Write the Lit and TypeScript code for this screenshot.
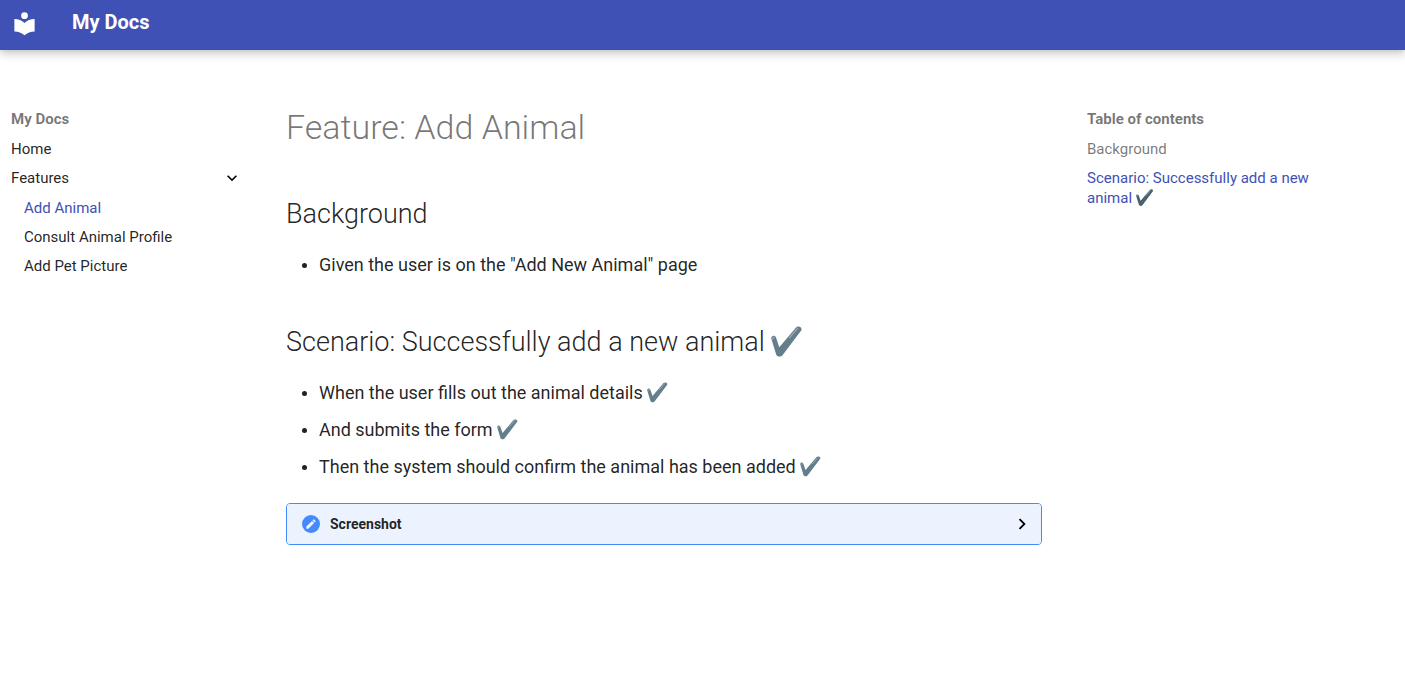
import { LitElement, html, css, svg } from "lit";
import { customElement } from "lit/decorators.js";

interface Entry { label: string; active?: boolean }

const pages: Entry[] = [
  { label: "Add Animal", active: true },
  { label: "Consult Animal Profile" },
  { label: "Add Pet Picture" },
];

const steps = [
  "When the user fills out the animal details",
  "And submits the form",
  "Then the system should confirm the animal has been added",
];

const check = html`<svg class="check" viewBox="0 0 36 36" role="img" aria-label="passed">
  <path class="check-body" d="M.3 14.500C0 10.800 4.500 10.200 5.700 13L9.600 24.500 28.800 1.900C31-.6 36.600 1 35.200 4.800L13.800 33.200C12 36.200 7.200 36.200 6 33z"/>
  <path fill="none" stroke="#b0bec5" stroke-width="1.500" stroke-linecap="round" opacity=".7" d="M21.500 13.500 30.500 3M2.200 15.200c-.1-1.300.5-2 1.500-2.100"/>
</svg>`;

const chevron = svg`<path d="M8.59 16.58 13.17 12 8.59 7.41 10 6l6 6-6 6z"/>`;

@customElement("app-root")
export class AppRoot extends LitElement {
  static styles = css`
    :host {
      display: block;
      font-family: Roboto, sans-serif;
      color: rgba(0, 0, 0, 0.87);
      -webkit-font-smoothing: antialiased;
    }
    a { color: inherit; text-decoration: none; }
    ul { list-style: none; margin: 0; padding: 0; }
    .header {
      display: flex;
      align-items: flex-start;
      gap: 34px;
      padding: 10px 11px 13px;
      background: #4051b5;
      color: #fff;
      box-shadow: 0 0 4px rgba(0, 0, 0, 0.1), 0 4px 9px rgba(0, 0, 0, 0.2);
    }
    .logo svg { display: block; width: 27px; height: 27px; fill: currentColor; }
    .title { font-size: 20px; line-height: 24px; font-weight: 700; }
    .grid {
      display: grid;
      grid-template-columns: 242px minmax(0, 1fr) 319px;
      padding-top: 59px;
    }
    .nav { font-size: 15px; line-height: 20px; }
    .side { padding-left: 11px; }
    .toc { padding: 0 76px 0 1px; }
    .nav-title { font-weight: 700; color: rgba(0, 0, 0, 0.54); margin: 0; }
    .nav li { margin-top: 10px; }
    .nav li + li { margin-top: 9px; }
    .nested { padding-left: 13px; }
    .section { display: flex; justify-content: space-between; align-items: center; }
    .section svg { width: 20px; height: 20px; transform: rotate(90deg); }
    .active { color: #4051b5; }
    .passed { color: rgba(0, 0, 0, 0.54); }
    .content { padding: 0 44px; font-size: 18px; line-height: 28px; }
    h1 {
      margin: -5px 0 45px;
      font-size: 34px;
      line-height: 46px;
      font-weight: 300;
      color: rgba(0, 0, 0, 0.54);
    }
    h2 { margin: 0 0 18px; font-size: 27px; line-height: 38px; font-weight: 300; }
    .steps { list-style: disc; padding-left: 33px; margin-bottom: 44px; }
    .steps li + li { margin-top: 9px; }
    .steps li::marker { font-size: 16px; }
    .last { margin-bottom: 22px; }
    .check { width: 1.15em; height: 1.15em; vertical-align: -0.22em; }
    .check-body { fill: #647f8b; }
    .nav .check-body { fill: #4a626e; }
    details {
      border: 1px solid #448aff;
      border-radius: 4px;
      font-size: 14px;
      line-height: 20px;
    }
    summary {
      display: flex;
      align-items: center;
      gap: 10px;
      padding: 9px 8px 9px 15px;
      background: #ecf3ff;
      border-radius: 3px;
      font-weight: 700;
      list-style: none;
      cursor: pointer;
    }
    summary .arrow { margin-left: auto; width: 22px; height: 22px; }
    .note { width: 18px; height: 18px; }
  `;

  render() {
    return html`
      <header class="header">
        <a class="logo" href="#" aria-label="My Docs">
          <svg viewBox="0 0 24 24"><path d="M12 8a3 3 0 0 0 3-3 3 3 0 0 0-3-3 3 3 0 0 0-3 3 3 3 0 0 0 3 3m0 3.54C9.64 9.35 6.5 8 3 8v11c3.5 0 6.64 1.35 9 3.54 2.36-2.19 5.5-3.54 9-3.54V8c-3.5 0-6.64 1.35-9 3.54z"/></svg>
        </a>
        <span class="title">My Docs</span>
      </header>
      <div class="grid">
        <nav class="nav side" aria-label="Navigation">
          <p class="nav-title">My Docs</p>
          <ul>
            <li><a href="#">Home</a></li>
            <li>
              <a class="section" href="#">Features <svg viewBox="0 0 24 24">${chevron}</svg></a>
              <ul class="nested">
                ${pages.map((p) => html`<li><a class=${p.active ? "active" : ""} href="#">${p.label}</a></li>`)}
              </ul>
            </li>
          </ul>
        </nav>
        <main class="content">
          <h1>Feature: Add Animal</h1>
          <h2>Background</h2>
          <ul class="steps"><li>Given the user is on the "Add New Animal" page</li></ul>
          <h2>Scenario: Successfully add a new animal ${check}</h2>
          <ul class="steps last">${steps.map((s) => html`<li>${s} ${check}</li>`)}</ul>
          <details>
            <summary>
              <svg class="note" viewBox="0 0 18 18"><circle cx="9" cy="9" r="9" fill="#448aff"/><path fill="#ecf3ff" d="M4.300 11.600v2.100h2.100l5.700-5.700L10 5.900zM13.500 6.600a.5.5 0 0 0 0-.7l-1.400-1.400a.5.5 0 0 0-.7 0l-.9.9 2.100 2.100z"/></svg>
              Screenshot
              <svg class="arrow" viewBox="0 0 24 24">${chevron}</svg>
            </summary>
          </details>
        </main>
        <nav class="nav toc" aria-label="Table of contents">
          <p class="nav-title">Table of contents</p>
          <ul>
            <li><a class="passed" href="#">Background</a></li>
            <li><a class="active" href="#">Scenario: Successfully add a new animal ${check}</a></li>
          </ul>
        </nav>
      </div>
    `;
  }
}
